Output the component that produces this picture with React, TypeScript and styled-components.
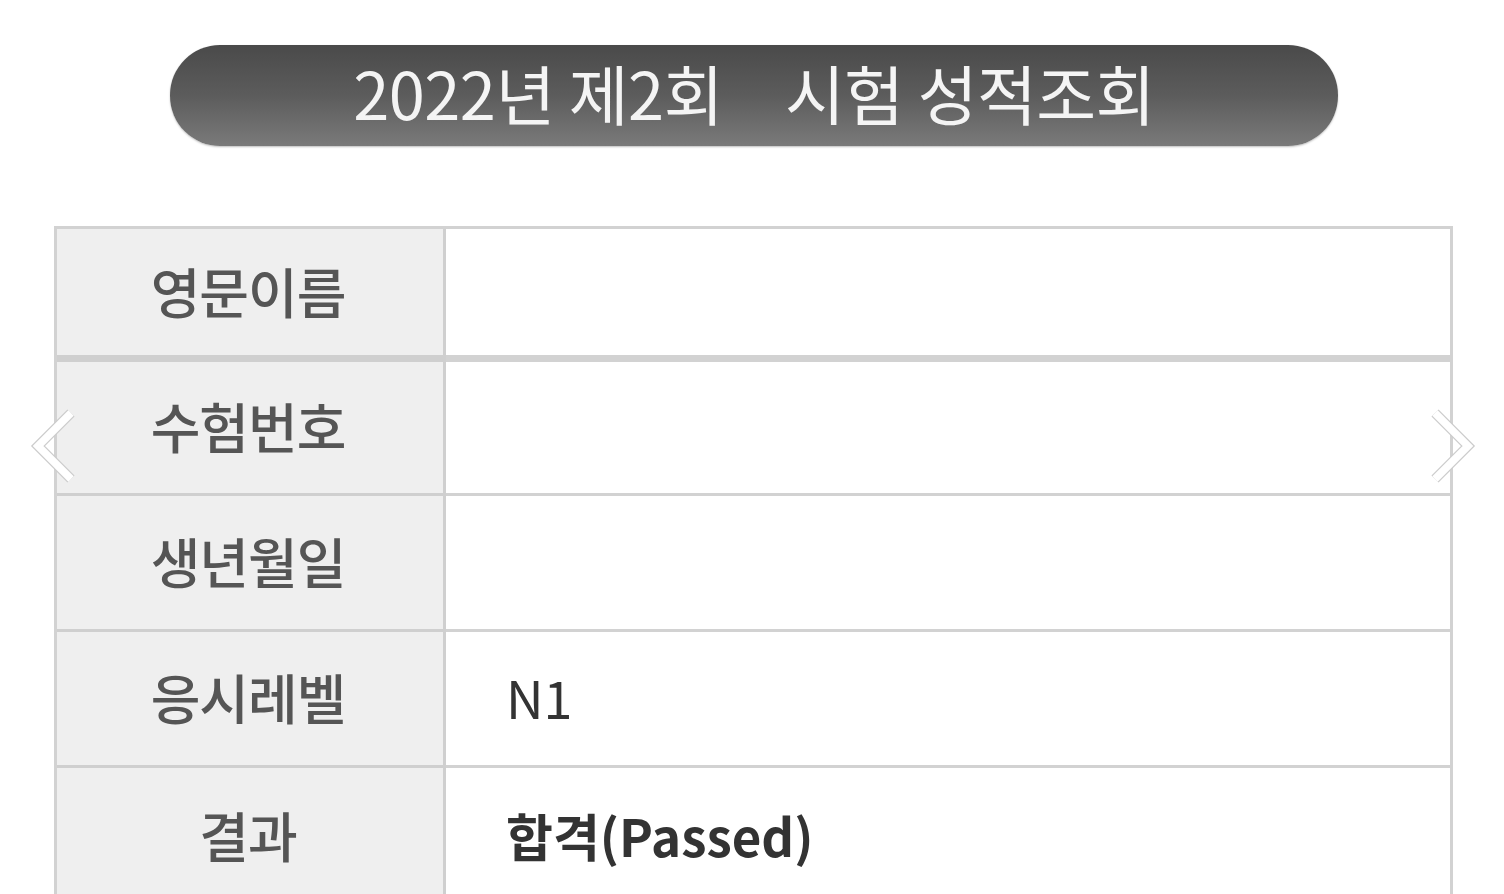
import React from 'react';
import styled, { createGlobalStyle } from 'styled-components';

const GlobalStyle = createGlobalStyle`
  html, body {
    margin: 0;
    padding: 0;
    background: #ffffff;
    font-family: "Noto Sans CJK KR", "Noto Sans", sans-serif;
  }
`;

const Page = styled.div`
  position: relative;
  width: 1504px;
  height: 894px;
  overflow: hidden;
  background: #ffffff;
`;

const TitleBar = styled.div`
  margin: 45px 0 0 170px;
  width: 1168px;
  height: 101px;
  border-radius: 50px;
  background: linear-gradient(to bottom, #4a4a4a 0%, #5c5c5c 50%, #7a7a7a 100%);
  box-shadow: 0 1px 2px rgba(0, 0, 0, 0.25);
  display: flex;
  align-items: center;
  justify-content: center;
  gap: 62px;
  color: #f4f4f4;
  font-size: 65px;
  font-weight: 400;
  letter-spacing: -0.5px;
  padding-bottom: 8px;
  box-sizing: border-box;
`;

const Table = styled.div`
  margin: 80px 0 0 54px;
  width: 1399px;
  border: 3px solid #d2d2d2;
  border-bottom: none;
  box-sizing: border-box;
  display: grid;
  grid-template-columns: 389px 1fr;
`;

const Label = styled.div<{ $h: number; $thick?: boolean }>`
  height: ${(p) => p.$h}px;
  background: #efefef;
  border-right: 3px solid #cfcfcf;
  border-bottom: ${(p) => (p.$thick ? 7 : 3)}px solid #cfcfcf;
  display: flex;
  align-items: center;
  justify-content: center;
  padding-right: 4px;
  padding-bottom: 4px;
  box-sizing: border-box;
  color: #555555;
  font-size: 54px;
  font-weight: 500;
  letter-spacing: -1px;
`;

const Value = styled.div<{ $h: number; $thick?: boolean; $bold?: boolean }>`
  height: ${(p) => p.$h}px;
  background: #ffffff;
  border-bottom: ${(p) => (p.$thick ? 7 : 3)}px solid #d2d2d2;
  display: flex;
  align-items: center;
  padding-left: 60px;
  padding-bottom: 4px;
  box-sizing: border-box;
  color: #333333;
  font-size: ${(p) => (p.$bold ? 51 : 52)}px;
  font-weight: ${(p) => (p.$bold ? 700 : 400)};
  letter-spacing: 0;
`;

const Arrow = styled.svg<{ $left: number }>`
  position: absolute;
  top: 403px;
  left: ${(p) => p.$left}px;
  width: 50px;
  height: 86px;
`;

const rows = [
  { label: '영문이름', value: '', h: 133, thick: true },
  { label: '수험번호', value: '', h: 134 },
  { label: '생년월일', value: '', h: 136 },
  { label: '응시레벨', value: 'N1', h: 136 },
  { label: '결과', value: '합격(Passed)', h: 140, bold: true },
];

const App: React.FC = () => (
  <Page>
    <GlobalStyle />
    <TitleBar>
      <span>2022년 제2회</span>
      <span>시험 성적조회</span>
    </TitleBar>
    <Table>
      {rows.map((r) => (
        <React.Fragment key={r.label}>
          <Label $h={r.h} $thick={r.thick}>{r.label}</Label>
          <Value $h={r.h} $thick={r.thick} $bold={r.bold}>{r.value}</Value>
        </React.Fragment>
      ))}
    </Table>
    <Arrow $left={28} viewBox="0 0 50 86">
      <polyline points="43,10 10,43 43,76" fill="none" stroke="#cccccc" strokeWidth="10" />
      <polyline points="43,10 10,43 43,76" fill="none" stroke="#ffffff" strokeWidth="7.5" />
    </Arrow>
    <Arrow $left={1428} viewBox="0 0 50 86">
      <polyline points="7,10 40,43 7,76" fill="none" stroke="#cccccc" strokeWidth="10" />
      <polyline points="7,10 40,43 7,76" fill="none" stroke="#ffffff" strokeWidth="7.5" />
    </Arrow>
  </Page>
);

export default App;
